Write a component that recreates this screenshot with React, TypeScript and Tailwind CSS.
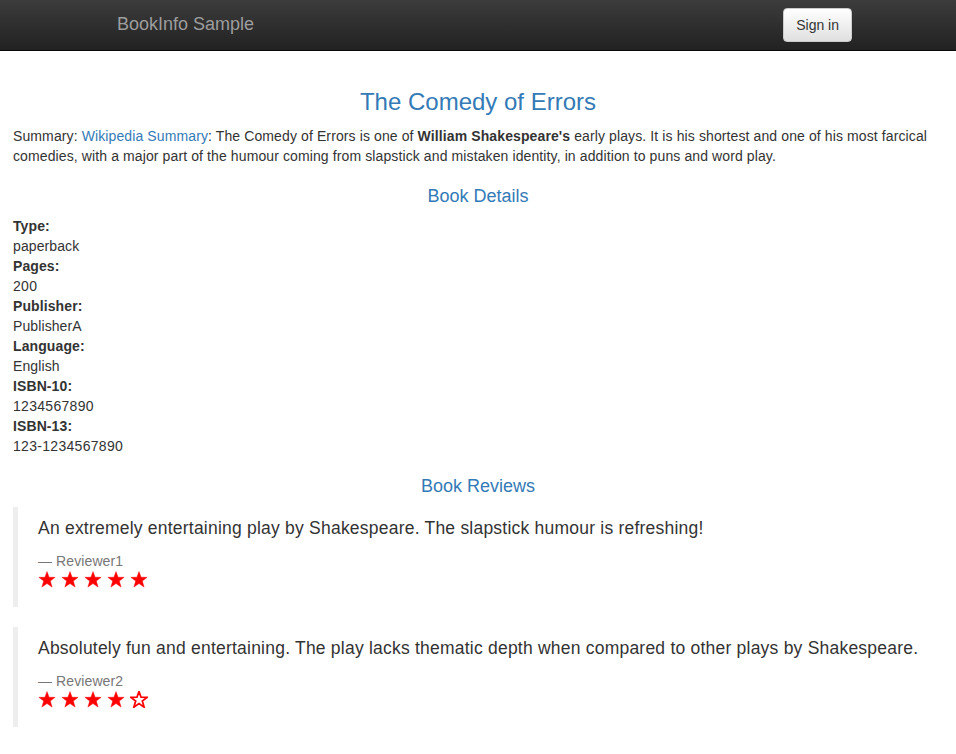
import React from "react";

const FONT = { fontFamily: '"Liberation Sans", Arial, Helvetica, sans-serif' };

function Star({ empty }: { empty?: boolean }) {
  return (
    <svg width="18" height="17" viewBox="0 0 24 23" className="block">
      <polygon
        points="12,0.8 14.8,8.4 23,8.6 16.5,13.6 18.9,21.8 12,17 5.1,21.8 7.5,13.6 1,8.6 9.2,8.4"
        fill={empty ? "#ffffff" : "#ff0000"}
        stroke="#ff0000"
        strokeWidth={empty ? 2.4 : 0.6}
        strokeLinejoin="miter"
      />
    </svg>
  );
}

function Review({ text, reviewer, stars }: { text: string; reviewer: string; stars: number }) {
  return (
    <blockquote className="border-l-[5px] border-[#eeeeee] pt-[9px] pb-[11px] px-[20px] mb-[20px]">
      <p className="text-[17.5px] leading-[25px] tracking-[0.22px] text-[#333333] mb-[10px]">{text}</p>
      <small className="block text-[14px] leading-[20px] tracking-[0.1px] text-[#777777]">{"\u2014\u00a0" + reviewer}</small>
      <div className="flex gap-[5px] h-[25px] pt-0">
        {[0, 1, 2, 3, 4].map((i) => (
          <Star key={i} empty={i >= stars} />
        ))}
      </div>
    </blockquote>
  );
}

const details: [string, string, boolean][] = [
  ["Type:", "paperback", false],
  ["Pages:", "200", true],
  ["Publisher:", "PublisherA", false],
  ["Language:", "English", false],
  ["ISBN-10:", "1234567890", true],
  ["ISBN-13:", "123-1234567890", true],
];

export default function App() {
  return (
    <div style={FONT} className="bg-white min-h-[754px] text-[14px] leading-[20px] text-[#333333]">
      <nav className="h-[51px] border-b border-[#080808] bg-gradient-to-b from-[#3c3c3c] to-[#222222] flex items-center justify-between pl-[117px] pr-[104px]">
        <span className="text-[18px] leading-[20px] text-[#9d9d9d] -mt-[2px]">BookInfo Sample</span>
        <button className="h-[34px] px-[12px] text-[14px] leading-[20px] text-[#333333] border border-[#cccccc] rounded-[4px] bg-gradient-to-b from-white to-[#e0e0e0] shadow-[inset_0_1px_0_rgba(255,255,255,0.15),0_1px_1px_rgba(0,0,0,0.075)]">
          Sign in
        </button>
      </nav>

      <div className="px-[13px] pt-[38px] flex flex-col">
        <h3 className="text-center text-[#337ab7] text-[24px] leading-[26.4px] mb-[11px]">The Comedy of Errors</h3>
        <p className="mb-[21px] tracking-[0.11px]">
          Summary: <a className="text-[#337ab7]">Wikipedia Summary</a>: The Comedy of Errors is one of{" "}
          <b>William Shakespeare's</b> early plays. It is his shortest and one of his most farcical comedies, with a
          major part of the humour coming from slapstick and mistaken identity, in addition to puns and word play.
        </p>

        <h4 className="text-center text-[#337ab7] text-[18px] leading-[19.8px] mb-[9px]">Book Details</h4>
        <dl className="mb-[21px]">
          {details.map(([k, v, digits]) => (
            <div key={k}>
              <dt className="font-bold tracking-[0.1px]">{k}</dt>
              <dd className={digits ? "tracking-[0.3px]" : "tracking-[0.1px]"}>{v}</dd>
            </div>
          ))}
        </dl>

        <h4 className="text-center text-[#337ab7] text-[18px] leading-[19.8px] mb-[10px]">Book Reviews</h4>
        <Review
          text="An extremely entertaining play by Shakespeare. The slapstick humour is refreshing!"
          reviewer="Reviewer1"
          stars={5}
        />
        <Review
          text="Absolutely fun and entertaining. The play lacks thematic depth when compared to other plays by Shakespeare."
          reviewer="Reviewer2"
          stars={4}
        />
      </div>
    </div>
  );
}
